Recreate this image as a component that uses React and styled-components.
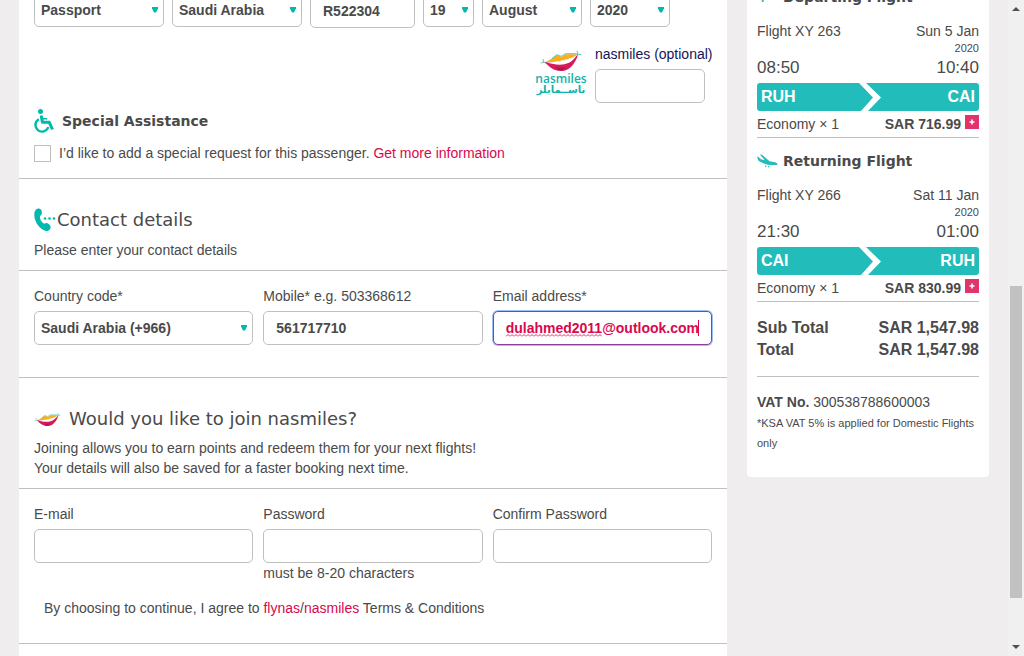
import React from "react";
import styled, { createGlobalStyle } from "styled-components";

const teal = "#00b9ae";
const crimson = "#d9084d";
const line = "#c0c0c0";
const ink = "#4a4a4a";

const GlobalStyle = createGlobalStyle`
  * { box-sizing: border-box; }
  body {
    margin: 0;
    background: #efedee;
    color: ${ink};
    font-family: "Liberation Sans", Arial, sans-serif;
    font-size: 14px;
    line-height: 20px;
  }
  h2, h3, p, dl, dd { margin: 0; }
  a { color: ${crimson}; text-decoration: none; }
`;

const Viewport = styled.div`
  display: flex;
  height: 100vh;
  overflow: hidden;
`;

const Page = styled.div`
  flex: 1;
  min-width: 0;
  display: flex;
  align-items: flex-start;
  gap: 20px;
  padding: 0 19px;
  margin-top: -26px;
`;

const Main = styled.main`
  flex: 1;
  min-width: 0;
  background: #fff;
  padding-bottom: 40px;
`;

const Section = styled.section`
  padding: ${(p) => p.$pad};
  border-bottom: 1px solid ${line};
`;

const Controls = styled.div`
  display: flex;
  align-items: flex-start;
  gap: 8px;
`;

const Control = styled.input`
  display: block;
  width: 100%;
  height: ${(p) => p.$height || 34}px;
  padding: 0 12px;
  border: 1px solid ${line};
  border-radius: 5px;
  background: #fff;
  color: ${ink};
  font: bold 14px "Liberation Sans", Arial, sans-serif;
  outline: none;
`;

const ActiveControl = styled(Control)`
  border-color: #8d3fa0;
  box-shadow: 0 0 0 1px #9dbff5;
  color: ${crimson};
`;

const PickerBox = styled.span`
  position: relative;
  display: block;
  width: ${(p) => p.$width || "100%"};
`;

const PickerSelect = styled.select`
  appearance: none;
  display: block;
  width: 100%;
  height: 34px;
  padding: 0 6px;
  border: 1px solid ${line};
  border-radius: 5px;
  background: #fff;
  color: ${ink};
  font: bold 14px "Liberation Sans", Arial, sans-serif;
`;

const PickerArrow = styled.svg`
  position: absolute;
  right: 6px;
  top: 14px;
  pointer-events: none;
`;

const DocumentNumber = styled.span`
  width: 105px;
`;

const Member = styled.div`
  display: flex;
  justify-content: flex-end;
  gap: 8px;
  padding: 16px 0 3px;
`;

const MemberField = styled.div`
  width: 117px;
`;

const MemberInput = styled(Control)`
  width: 110px;
`;

const Label = styled.label`
  display: block;
  margin-bottom: 5px;
  white-space: nowrap;
  color: ${(p) => (p.$navy ? "#14145a" : ink)};
`;

const Logo = styled.div`
  display: flex;
  flex-direction: column;
  align-items: center;
  width: 52px;
  padding-top: 6px;
  color: #0fb3ac;
`;

const LogoLatin = styled.span`
  font: 600 12px/13px "Open Sans", sans-serif;
`;

const LogoArabic = styled.span`
  font: bold 10px/10px "DejaVu Sans", sans-serif;
  white-space: nowrap;
`;

const Heading = styled.h2`
  display: flex;
  align-items: center;
  gap: ${(p) => p.$gap || 0}px;
  height: 28px;
  margin-bottom: ${(p) => p.$after}px;
  font: 18px/28px "DejaVu Sans", Verdana, sans-serif;
`;

const SubHeading = styled.h3`
  display: flex;
  align-items: center;
  gap: ${(p) => p.$gap}px;
  font: bold 14px/30px "DejaVu Sans", Verdana, sans-serif;
`;

const Request = styled.div`
  display: flex;
  align-items: center;
  gap: 8px;
  margin-top: 7px;
`;

const Tick = styled.input`
  appearance: none;
  width: 17px;
  height: 17px;
  margin: 0;
  border: 1px solid ${line};
  background: #fff;
`;

const Fields = styled.div`
  display: grid;
  grid-template-columns: repeat(3, 1fr);
  gap: 10px;
`;

const ActiveBox = styled.div`
  position: relative;
`;

const Squiggle = styled.svg`
  position: absolute;
  left: 13px;
  top: 23px;
`;

const Caret = styled.span`
  position: absolute;
  right: 13px;
  top: 9px;
  width: 1px;
  height: 16px;
  background: ${crimson};
`;

const Terms = styled.p`
  padding: 15px 10px 0;
`;

const Summary = styled.aside`
  width: 242px;
  padding: 0 10px 24px;
  border-radius: 0 0 4px 4px;
  background: #fff;
`;

const Flight = styled.section`
  padding-top: 8px;
  border-bottom: 1px solid ${line};
`;

const FlightTop = styled.div`
  display: flex;
  justify-content: space-between;
  margin-top: 9px;
`;

const Year = styled.div`
  font-size: 11px;
  line-height: 15px;
  text-align: right;
`;

const Times = styled.div`
  display: flex;
  justify-content: space-between;
  margin-bottom: 3px;
  font-size: 17px;
  line-height: 24px;
`;

const Route = styled.div`
  display: grid;
  grid-template-columns: 1fr auto 1fr;
  padding: 0 4px;
  border-radius: 3px;
  background: #22bcba;
  color: #fff;
  font-size: 16px;
  font-weight: bold;
  line-height: 28px;
`;

const Arrival = styled.span`
  text-align: right;
`;

const Fare = styled.div`
  display: flex;
  height: 26px;
  line-height: 26px;
`;

const Price = styled.strong`
  margin-left: auto;
`;

const Expand = styled.button`
  display: grid;
  place-items: center;
  width: 14px;
  height: 14px;
  margin: 4px 0 0 4px;
  padding: 0;
  border: 0;
  background: #e2336b;
`;

const Totals = styled.dl`
  display: grid;
  grid-template-columns: 1fr auto;
  padding: 15px 0 15px 0;
  border-bottom: 1px solid ${line};
  font-size: 16px;
  font-weight: bold;
  line-height: 22px;
`;

const Vat = styled.p`
  padding: 15px 0 1px;
`;

const Note = styled.p`
  font-size: 11px;
`;

const Scrollbar = styled.div`
  display: flex;
  flex-direction: column;
  align-items: center;
  width: 16px;
  background: #f0f0f0;
`;

const ScrollGap = styled.div`
  flex: ${(p) => p.$share};
`;

const Thumb = styled.div`
  flex: 312;
  width: 12px;
  background: #c1c1c1;
`;

const Picker = ({ id, width, value, label }) => (
  <PickerBox $width={width}>
    <PickerSelect id={id} aria-label={label} defaultValue={value}>
      <option>{value}</option>
    </PickerSelect>
    <PickerArrow width="6" height="6" viewBox="0 0 6 6" aria-hidden="true">
      <path d="M0 0H6V1.500L4 5.500H2L0 1.500Z" fill={teal} />
    </PickerArrow>
  </PickerBox>
);

const Lips = ({ width, height }) => (
  <svg width={width} height={height} viewBox="0 0 126 66" aria-hidden="true">
    <path d="M13 37C28 34 38 20 52 15L64 21L76 13L113 13C102 22 92 26 80 28C58 34 40 38 13 37Z" fill="#f9b01e" />
    <path d="M13 36C42 40 92 32 114 14C106 40 88 63 64 63C40 63 28 50 13 36Z" fill="#d71a5b" />
    <path d="M20 37C52 37 88 30 109 17C98 36 78 44 60 44C46 44 32 42 20 37Z" fill="#fff" />
    <path d="M46 51L62 54L78 50L68 61H54Z" fill="#b5124b" />
    <path d="M2 39L16 36M9 27L11 37M103 11L124 14M111 2L114 16M36 26L50 14L64 19L76 11H104" fill="none" stroke="#4bbdb2" strokeWidth="2.600" />
  </svg>
);

const Wheelchair = () => (
  <svg width="20" height="24" viewBox="0 0 20 24" fill="none" stroke={teal} aria-hidden="true">
    <circle cx="6.500" cy="2.500" r="2.500" fill={teal} stroke="none" />
    <path d="M7.200 6.500L8.400 13.300H15.300L18.500 20.500" strokeWidth="3" strokeLinejoin="round" />
    <path d="M8 9.700H13" strokeWidth="1.600" />
    <path d="M4.800 10.200A6.600 6.600 0 1 0 14.300 18" strokeWidth="2.400" />
  </svg>
);

const Phone = () => (
  <svg width="22" height="24" viewBox="0 0 22 24" fill={teal} aria-hidden="true">
    <path d="M4 .5C6 .2 7.500 1.500 7.800 3.500C8 5.500 7.800 7.500 6 8C5.500 11 7.500 14.500 10.500 15.800C12 14.500 13.500 15 15 16.200C16.800 17.800 17.200 19.500 16 21.200C14.500 23.200 12 23.500 9.500 22C4 19 .5 13 .3 7C.2 3.500 1.500 1 4 .5Z" />
    <circle cx="11" cy="10.500" r="1.300" />
    <circle cx="15.500" cy="10.500" r="1.300" />
    <circle cx="20" cy="10.500" r="1.300" />
  </svg>
);

const LandingPlane = () => (
  <svg width="21" height="14" viewBox="0 0 21 14" fill="#22bcba" aria-hidden="true">
    <path d="M0 2.500L1.500 3L4 5.300L7.800 6.200L2.800 .5L5 .7L12.500 7.200L18 8.300C20.500 8.900 21 10.500 20 11H13C9 10.500 4 8.500 1.500 6.800Z" />
    <path d="M8 11.500L9.500 11.800L9.200 13L8 12.800ZM11 12H12.300V13.300H11Z" />
  </svg>
);

const DepartingPlane = () => (
  <svg width="21" height="14" viewBox="0 0 21 14" fill="#22bcba" aria-hidden="true">
    <path d="M0 5L1.500 4.500L4 6.500L8 5L2 1.500L4 .5L12 3.500L17 1.500C19.500 .5 21 1.500 20 3L8 9.500C6 10.500 4 10.500 3 9.500Z" />
    <path d="M4.500 10.500L7 10L6.500 12H5Z" />
  </svg>
);

const FlightLeg = ({ icon, title, number, day, departs, arrives, from, to, price }) => (
  <Flight>
    <SubHeading $gap={5}>
      {icon}
      {title}
    </SubHeading>
    <FlightTop>
      <span>{number}</span>
      <span>{day}</span>
    </FlightTop>
    <Year>2020</Year>
    <Times>
      <span>{departs}</span>
      <span>{arrives}</span>
    </Times>
    <Route>
      <span>{from}</span>
      <svg width="26" height="28" viewBox="0 0 26 28" aria-hidden="true">
        <path d="M4 0H11L26 14.500L13 28H6L18 14.500Z" fill="#fff" />
      </svg>
      <Arrival>{to}</Arrival>
    </Route>
    <Fare>
      <span>Economy × 1</span>
      <Price>{price}</Price>
      <Expand type="button" aria-label={`Fare details for ${number}`}>
        <svg width="6" height="6" viewBox="0 0 6 6" aria-hidden="true">
          <path d="M3 .5V5.500M.5 3H5.500" stroke="#fff" strokeWidth="1.600" />
        </svg>
      </Expand>
    </Fare>
  </Flight>
);

export default function App() {
  return (
    <>
      <GlobalStyle />
      <Viewport>
        <Page>
          <Main>
            <Section $pad="19px 15px 15px">
              <Controls>
                <Picker width="130px" value="Passport" label="Document type" />
                <Picker width="130px" value="Saudi Arabia" label="Issuing country" />
                <DocumentNumber>
                  <Control $height={35} aria-label="Document number" defaultValue="R522304" />
                </DocumentNumber>
                <Picker width="51px" value="19" label="Expiry day" />
                <Picker width="100px" value="August" label="Expiry month" />
                <Picker width="80px" value="2020" label="Expiry year" />
              </Controls>
              <Member>
                <Logo>
                  <Lips width={42} height={22} />
                  <LogoLatin>nasmiles</LogoLatin>
                  <LogoArabic lang="ar" dir="rtl">ناســمايلز</LogoArabic>
                </Logo>
                <MemberField>
                  <Label $navy htmlFor="member">nasmiles (optional)</Label>
                  <MemberInput id="member" />
                </MemberField>
              </Member>
              <SubHeading $gap={8}>
                <Wheelchair />
                Special Assistance
              </SubHeading>
              <Request>
                <Tick type="checkbox" id="request" />
                <span>
                  <label htmlFor="request">I’d like to add a special request for this passenger.</label>{" "}
                  <a href="#assistance">Get more information</a>
                </span>
              </Request>
            </Section>

            <Section $pad="27px 15px 10px">
              <Heading $gap={1} $after={6}>
                <Phone />
                Contact details
              </Heading>
              <p>Please enter your contact details</p>
            </Section>

            <Section $pad="15px 15px 32px">
              <Fields>
                <div>
                  <Label htmlFor="country">Country code*</Label>
                  <Picker id="country" value="Saudi Arabia (+966)" />
                </div>
                <div>
                  <Label htmlFor="mobile">Mobile* e.g. 503368612</Label>
                  <Control id="mobile" defaultValue="561717710" />
                </div>
                <div>
                  <Label htmlFor="email">Email address*</Label>
                  <ActiveBox>
                    <ActiveControl id="email" defaultValue="dulahmed2011@outlook.com" />
                    <Squiggle width="96" height="3" aria-hidden="true">
                      <pattern id="wave" width="4" height="3" patternUnits="userSpaceOnUse">
                        <path d="M0 2.500L2 .5L4 2.500" fill="none" stroke="#e8305a" />
                      </pattern>
                      <rect width="96" height="3" fill="url(#wave)" />
                    </Squiggle>
                    <Caret />
                  </ActiveBox>
                </div>
              </Fields>
            </Section>

            <Section $pad="27px 15px 10px">
              <Heading $gap={8} $after={5}>
                <Lips width={27} height={15} />
                Would you like to join nasmiles?
              </Heading>
              <p>
                Joining allows you to earn points and redeem them for your next flights!
                <br />
                Your details will also be saved for a faster booking next time.
              </p>
            </Section>

            <Section $pad="15px 15px 25px">
              <Fields>
                <div>
                  <Label htmlFor="join-email">E-mail</Label>
                  <Control id="join-email" type="email" />
                </div>
                <div>
                  <Label htmlFor="password">Password</Label>
                  <Control id="password" type="password" />
                  <p>must be 8-20 characters</p>
                </div>
                <div>
                  <Label htmlFor="confirm">Confirm Password</Label>
                  <Control id="confirm" type="password" />
                </div>
              </Fields>
              <Terms>
                By choosing to continue, I agree to <a href="#flynas">flynas</a>/<a href="#nasmiles">nasmiles</a> Terms &amp; Conditions
              </Terms>
            </Section>
          </Main>

          <Summary>
            <FlightLeg icon={<DepartingPlane />} title="Departing Flight" number="Flight XY 263" day="Sun 5 Jan" departs="08:50" arrives="10:40" from="RUH" to="CAI" price="SAR 716.99" />
            <FlightLeg icon={<LandingPlane />} title="Returning Flight" number="Flight XY 266" day="Sat 11 Jan" departs="21:30" arrives="01:00" from="CAI" to="RUH" price="SAR 830.99" />
            <Totals>
              <dt>Sub Total</dt>
              <dd>SAR 1,547.98</dd>
              <dt>Total</dt>
              <dd>SAR 1,547.98</dd>
            </Totals>
            <Vat>
              <strong>VAT No.</strong> 300538788600003
            </Vat>
            <Note>*KSA VAT 5% is applied for Domestic Flights only</Note>
          </Summary>
        </Page>
        <Scrollbar aria-hidden="true">
          <svg width="16" height="17" viewBox="0 0 16 17">
            <path d="M4 11L8 7L12 11Z" fill="#505050" />
          </svg>
          <ScrollGap $share={269} />
          <Thumb />
          <ScrollGap $share={41} />
          <svg width="16" height="17" viewBox="0 0 16 17">
            <path d="M4 6L8 10L12 6Z" fill="#505050" />
          </svg>
        </Scrollbar>
      </Viewport>
    </>
  );
}
